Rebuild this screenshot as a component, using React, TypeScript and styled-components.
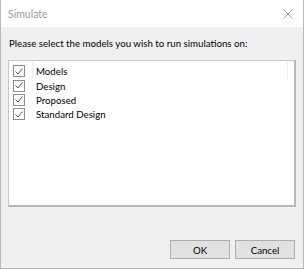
import styled, { createGlobalStyle } from "styled-components";

const GlobalStyle = createGlobalStyle`
  html, body {
    margin: 0;
    padding: 0;
    background: #f0f0f0;
  }
  * {
    box-sizing: border-box;
  }
`;

const models = ["Models", "Design", "Proposed", "Standard Design"];

const Window = styled.div`
  width: 304px;
  height: 269px;
  display: flex;
  flex-direction: column;
  background: #f0f0f0;
  border: 1px solid #b9b9b9;
  border-top: none;
  font-family: Lato, "Open Sans", sans-serif;
  font-size: 9.7px;
  color: #000;
`;

const TitleBar = styled.div`
  height: 27px;
  flex: none;
  display: flex;
  align-items: center;
  justify-content: space-between;
  padding: 0 10px 0 7px;
  background: #fff;
`;

const Title = styled.span`
  font-size: 10.5px;
  color: #999;
`;

const CloseIcon = styled.svg`
  width: 10px;
  height: 10px;
  stroke: #9a9a9a;
  stroke-width: 1;
`;

const Body = styled.div`
  flex: 1;
  display: flex;
  flex-direction: column;
  padding: 8px 8px 9px 7px;
`;

const Prompt = styled.p`
  margin: 0 0 9px 1px;
  line-height: 16px;
  white-space: nowrap;
`;

const ListBox = styled.div`
  position: relative;
  height: 147px;
  width: 288px;
  background: #fff;
  border-top: 1px solid #c8c8c8;
  border-left: 1px solid #c8c8c8;
  border-right: 2px solid #b8b8b8;
  border-bottom: 2px solid #b8b8b8;
  padding: 3px 0 0 4px;
  display: flex;
  flex-direction: column;
`;

const Separator = styled.div<{ $left: number }>`
  position: absolute;
  top: 1px;
  left: ${({ $left }) => $left}px;
  width: 1px;
  height: 18px;
  background: #ececec;
`;

const Row = styled.label`
  display: flex;
  align-items: center;
  gap: 11px;
  height: 14.4px;
  line-height: 14px;
`;

const Box = styled.span`
  width: 12px;
  height: 12px;
  flex: none;
  border: 1px solid #8c8c8c;
  background: #fff;
  display: flex;
  align-items: center;
  justify-content: center;
`;

const Footer = styled.div`
  margin-top: auto;
  display: flex;
  justify-content: flex-end;
  gap: 5px;
`;

const Button = styled.button`
  width: 60px;
  height: 19px;
  padding: 0;
  background: #e1e1e1;
  border: 1px solid #adadad;
  font-family: inherit;
  font-size: 9.7px;
  color: #000;
`;

export default function App() {
  return (
    <>
      <GlobalStyle />
      <Window>
        <TitleBar>
          <Title>Simulate</Title>
          <CloseIcon viewBox="0 0 10 10">
            <path d="M0.5 0.5 L9.5 9.5 M9.5 0.5 L0.5 9.5" />
          </CloseIcon>
        </TitleBar>
        <Body>
          <Prompt>Please select the models you wish to run simulations on:</Prompt>
          <ListBox>
            <Separator $left={23} />
            <Separator $left={278} />
            {models.map(m => (
              <Row key={m}>
                <Box>
                  <svg width="8" height="7" viewBox="0 0 8 7">
                    <path d="M0.5 3.5 L3 6 L7.5 0.5" fill="none" stroke="#555" strokeWidth="1" />
                  </svg>
                </Box>
                {m}
              </Row>
            ))}
          </ListBox>
          <Footer>
            <Button>OK</Button>
            <Button>Cancel</Button>
          </Footer>
        </Body>
      </Window>
    </>
  );
}
